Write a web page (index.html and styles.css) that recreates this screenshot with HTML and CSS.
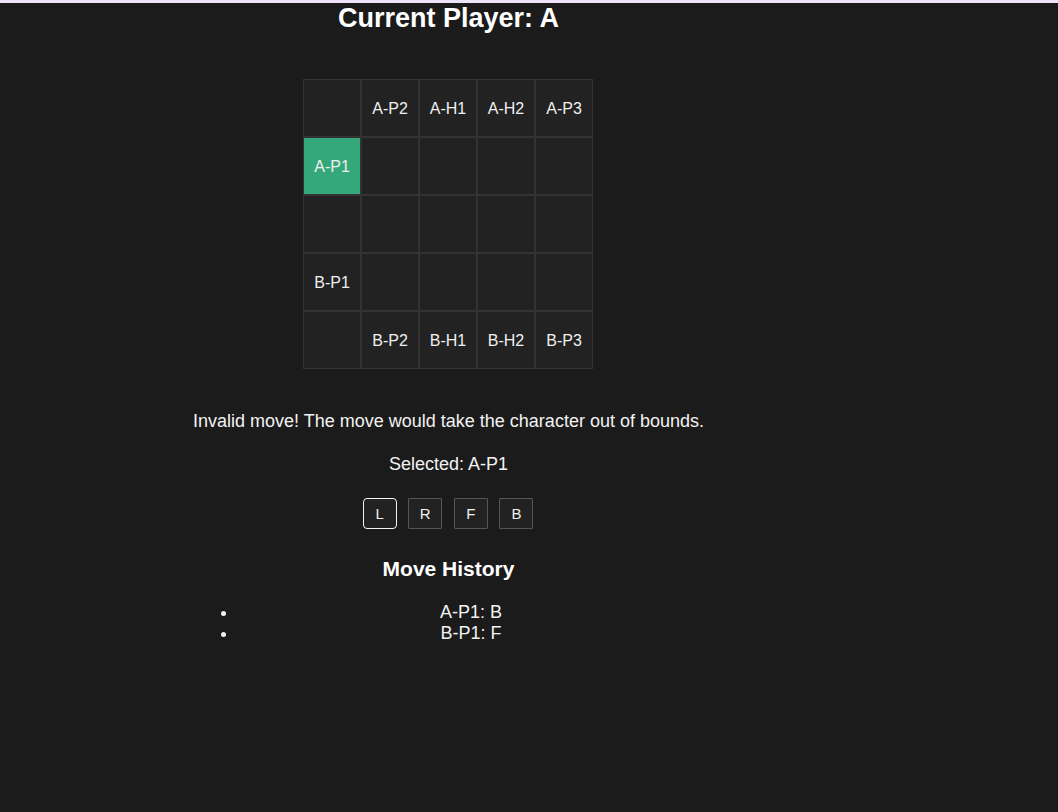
FILE: index.html
```html
<!DOCTYPE html>
<html lang="en">
<head>
<meta charset="utf-8">
<title>Game</title>
<link rel="stylesheet" href="styles.css">
</head>
<body>
<div class="topbar"></div>
<div class="page">
  <div class="app">
    <h2 class="title">Current Player: A</h2>
    <div class="board">
      <div class="cell"></div>
      <div class="cell">A-P2</div>
      <div class="cell">A-H1</div>
      <div class="cell">A-H2</div>
      <div class="cell">A-P3</div>

      <div class="cell selected">A-P1</div>
      <div class="cell"></div>
      <div class="cell"></div>
      <div class="cell"></div>
      <div class="cell"></div>

      <div class="cell"></div>
      <div class="cell"></div>
      <div class="cell"></div>
      <div class="cell"></div>
      <div class="cell"></div>

      <div class="cell">B-P1</div>
      <div class="cell"></div>
      <div class="cell"></div>
      <div class="cell"></div>
      <div class="cell"></div>

      <div class="cell"></div>
      <div class="cell">B-P2</div>
      <div class="cell">B-H1</div>
      <div class="cell">B-H2</div>
      <div class="cell">B-P3</div>
    </div>
    <p class="message">Invalid move! The move would take the character out of bounds.</p>
    <p class="selected-label">Selected: A-P1</p>
    <div class="moves">
      <button class="move active">L</button>
      <button class="move">R</button>
      <button class="move">F</button>
      <button class="move">B</button>
    </div>
    <h3 class="history-title">Move History</h3>
    <ul class="history">
      <li>A-P1: B</li>
      <li>B-P1: F</li>
    </ul>
  </div>
</div>
</body>
</html>
```
FILE: styles.css
```css
html, body {
  margin: 0;
  padding: 0;
  background: #1b1b1b;
}

body {
  font-family: "Liberation Sans", Arial, sans-serif;
  font-size: 18px;
  color: #f2f2f2;
  min-height: 812px;
}

.topbar {
  height: 3px;
  background: #ede5f7;
}

.page {
  width: 897px;
  display: flex;
  justify-content: center;
}

.app {
  display: flex;
  flex-direction: column;
  align-items: stretch;
  text-align: center;
}

.title {
  margin: 0;
  font-size: 27px;
  font-weight: bold;
  color: #ffffff;
}

.board {
  align-self: center;
  margin: 45px 1px 0 0;
  display: grid;
  grid-template-columns: repeat(5, 58px);
  grid-template-rows: repeat(5, 58px);
  width: 290px;
}

.cell {
  box-sizing: border-box;
  border: 1px solid #333333;
  background: #222222;
  display: flex;
  align-items: center;
  justify-content: center;
  padding-top: 1px;
  font-size: 16px;
  color: #f0f0f0;
}

.cell.selected {
  background: #34a87a;
  background-clip: padding-box;
}

.message {
  margin: 42px 0 0;
}

.selected-label {
  margin: 22px 0 0;
}

.moves {
  margin-top: 23px;
  padding-right: 1px;
  display: flex;
  justify-content: center;
  gap: 11.6px;
}

.move {
  box-sizing: border-box;
  width: 34px;
  height: 31px;
  padding: 0;
  background: #222222;
  border: 1px solid #555555;
  border-radius: 1px;
  color: #f0f0f0;
  font-family: "Liberation Sans", Arial, sans-serif;
  font-size: 15px;
}

.move.active {
  border-color: #f4f4f4;
  border-radius: 4px;
}

.history-title {
  margin: 28px 0 0;
  font-size: 21px;
  font-weight: bold;
  color: #ffffff;
}

.history {
  margin: 21px 0 0;
  padding-left: 45px;
}

.history li {
  text-align: center;
}
```
